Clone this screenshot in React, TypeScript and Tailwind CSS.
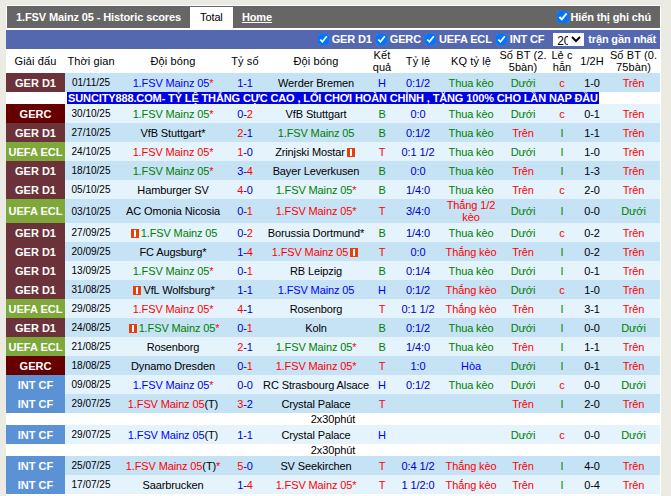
type Tone = "r" | "g" | "b" | "k"

type Row = {
  league: "GER D1" | "GERC" | "UEFA ECL" | "INT CF"
  date: string
  home: [string, Tone]
  homeCard?: boolean
  awayCard?: boolean
  score: [string, string]
  away: [string, Tone]
  res: string
  hc: string
  kq: string
  ou: string
  oe: string
  half: string
  ou2: string
  note?: string
}

const M = "1.FSV Mainz 05"

const rows: Row[] = [
  { league: "GER D1", date: "01/11/25", home: [M + "*", "b"], score: ["1", "1"], away: ["Werder Bremen", "k"], res: "H", hc: "0:1/2", kq: "Thua kèo", ou: "Dưới", oe: "c", half: "1-0", ou2: "Trên" },
  { league: "GERC", date: "30/10/25", home: [M + "*", "g"], score: ["0", "2"], away: ["VfB Stuttgart", "k"], res: "B", hc: "0:0", kq: "Thua kèo", ou: "Dưới", oe: "c", half: "0-1", ou2: "Trên" },
  { league: "GER D1", date: "27/10/25", home: ["VfB Stuttgart*", "k"], score: ["2", "1"], away: [M, "g"], res: "B", hc: "0:1/2", kq: "Thua kèo", ou: "Trên", oe: "l", half: "1-1", ou2: "Trên" },
  { league: "UEFA ECL", date: "24/10/25", home: [M + "*", "r"], score: ["1", "0"], away: ["Zrinjski Mostar", "k"], awayCard: true, res: "T", hc: "0:1 1/2", kq: "Thua kèo", ou: "Dưới", oe: "l", half: "1-0", ou2: "Trên" },
  { league: "GER D1", date: "18/10/25", home: [M + "*", "g"], score: ["3", "4"], away: ["Bayer Leverkusen", "k"], res: "B", hc: "0:0", kq: "Thua kèo", ou: "Trên", oe: "l", half: "1-3", ou2: "Trên" },
  { league: "GER D1", date: "05/10/25", home: ["Hamburger SV", "k"], score: ["4", "0"], away: [M + "*", "g"], res: "B", hc: "1/4:0", kq: "Thua kèo", ou: "Trên", oe: "c", half: "2-0", ou2: "Trên" },
  { league: "UEFA ECL", date: "03/10/25", home: ["AC Omonia Nicosia", "k"], score: ["0", "1"], away: [M + "*", "r"], res: "T", hc: "3/4:0", kq: "Thắng 1/2 kèo", ou: "Dưới", oe: "l", half: "0-0", ou2: "Dưới" },
  { league: "GER D1", date: "27/09/25", home: [M, "g"], homeCard: true, score: ["0", "2"], away: ["Borussia Dortmund*", "k"], res: "B", hc: "1/4:0", kq: "Thua kèo", ou: "Dưới", oe: "c", half: "0-2", ou2: "Trên" },
  { league: "GER D1", date: "20/09/25", home: ["FC Augsburg*", "k"], score: ["1", "4"], away: [M, "r"], awayCard: true, res: "T", hc: "0:0", kq: "Thắng kèo", ou: "Trên", oe: "l", half: "0-2", ou2: "Trên" },
  { league: "GER D1", date: "13/09/25", home: [M + "*", "g"], score: ["0", "1"], away: ["RB Leipzig", "k"], res: "B", hc: "0:1/4", kq: "Thua kèo", ou: "Dưới", oe: "l", half: "0-1", ou2: "Trên" },
  { league: "GER D1", date: "31/08/25", home: ["VfL Wolfsburg*", "k"], homeCard: true, score: ["1", "1"], away: [M, "b"], res: "H", hc: "0:1/2", kq: "Thắng kèo", ou: "Dưới", oe: "c", half: "1-0", ou2: "Trên" },
  { league: "UEFA ECL", date: "29/08/25", home: [M + "*", "r"], score: ["4", "1"], away: ["Rosenborg", "k"], res: "T", hc: "0:1 1/2", kq: "Thắng kèo", ou: "Trên", oe: "l", half: "3-1", ou2: "Trên" },
  { league: "GER D1", date: "24/08/25", home: [M + "*", "g"], homeCard: true, score: ["0", "1"], away: ["Koln", "k"], res: "B", hc: "0:1/2", kq: "Thua kèo", ou: "Dưới", oe: "l", half: "0-0", ou2: "Dưới" },
  { league: "UEFA ECL", date: "21/08/25", home: ["Rosenborg", "k"], score: ["2", "1"], away: [M + "*", "g"], res: "B", hc: "1/4:0", kq: "Thua kèo", ou: "Trên", oe: "l", half: "1-1", ou2: "Trên" },
  { league: "GERC", date: "18/08/25", home: ["Dynamo Dresden", "k"], score: ["0", "1"], away: [M + "*", "r"], res: "T", hc: "1:0", kq: "Hòa", ou: "Dưới", oe: "l", half: "0-1", ou2: "Trên" },
  { league: "INT CF", date: "09/08/25", home: [M + "*", "b"], score: ["0", "0"], away: ["RC Strasbourg Alsace", "k"], res: "H", hc: "0:1/2", kq: "Thua kèo", ou: "Dưới", oe: "c", half: "0-0", ou2: "Dưới" },
  { league: "INT CF", date: "29/07/25", home: [M + "(T)", "r"], score: ["3", "2"], away: ["Crystal Palace", "k"], res: "T", hc: "", kq: "", ou: "Trên", oe: "l", half: "2-0", ou2: "Trên", note: "2x30phút" },
  { league: "INT CF", date: "29/07/25", home: [M + "(T)", "b"], score: ["1", "1"], away: ["Crystal Palace", "k"], res: "H", hc: "", kq: "", ou: "Dưới", oe: "c", half: "0-0", ou2: "Dưới", note: "2x30phút" },
  { league: "INT CF", date: "25/07/25", home: [M + "(T)*", "r"], score: ["5", "0"], away: ["SV Seekirchen", "k"], res: "T", hc: "0:4 1/2", kq: "Thắng kèo", ou: "Trên", oe: "l", half: "4-0", ou2: "Trên" },
  { league: "INT CF", date: "17/07/25", home: ["Saarbrucken", "k"], score: ["1", "4"], away: [M + "*", "r"], res: "T", hc: "1 1/2:0", kq: "Thắng kèo", ou: "Trên", oe: "l", half: "0-4", ou2: "Trên" },
]

const leagueBg = {
  "GER D1": "bg-[#6b3339]",
  GERC: "bg-[#660000]",
  "UEFA ECL": "bg-[#7ea93a]",
  "INT CF": "bg-[#5b92d6]",
}

const tones: Record<Tone, string> = {
  r: "text-[#ff0000]",
  g: "text-[#008000]",
  b: "text-[#0000ff]",
  k: "text-black",
}

function toneOf(v: string) {
  if (v === "T" || v === "c" || v === "Trên" || v.startsWith("Thắng")) return tones.r
  if (v === "B" || v === "Dưới" || v === "Thua kèo" || v === "l") return tones.g
  if (v === "H" || v === "Hòa") return tones.b
  return tones.k
}

function Card() {
  return (
    <svg width="8" height="9" viewBox="0 0 8 9" className="mx-[2px] inline-block align-[-1px]">
      <rect width="8" height="9" fill="#e8400c" />
      <rect x="3" y="1" width="2" height="7" fill="#fff" />
    </svg>
  )
}

function Score({ a, b }: { a: string; b: string }) {
  const x = Number(a)
  const y = Number(b)
  return (
    <>
      <span className={x > y ? tones.r : "text-[#0000c8]"}>{a}</span>
      <span className="text-[#0000c8]">-</span>
      <span className={y > x ? tones.r : "text-[#0000c8]"}>{b}</span>
    </>
  )
}

function Team({ name, card, side }: { name: [string, Tone]; card?: boolean; side: "home" | "away" }) {
  const m = name[0].match(/^(.*?)(\(T\))?(\*)?$/)!
  return (
    <td className="text-center whitespace-nowrap">
      {card && side === "home" && <Card />}
      <span className={tones[name[1]]}>{m[1]}</span>
      {m[2] && <span className="text-black">{m[2]}</span>}
      {m[3] && <span className={name[1] === "k" ? "text-black" : tones.r}>*</span>}
      {card && side === "away" && <Card />}
    </td>
  )
}

function Check({ label }: { label: string }) {
  return (
    <label className="flex items-center gap-[3px]">
      <input type="checkbox" defaultChecked className="m-0 h-[11px] w-[11px]" />
      <span>{label}</span>
    </label>
  )
}

const headers = [
  "Giải đấu",
  "Thời gian",
  "Đội bóng",
  "Tỷ số",
  "Đội bóng",
  "Kết quả",
  "Tỷ lệ",
  "KQ tỷ lệ",
  "Số BT (2. 5bàn)",
  "Lẻ c hẵn",
  "1/2H",
  "Số BT (0. 75bàn)",
]

export default function App() {
  return (
    <div className="h-[496px] w-[671px] overflow-hidden bg-[#ebebe4] text-[11px] leading-[13px] font-['Liberation_Sans',Arial,sans-serif] text-black">
      <div className="mt-[5px] ml-[6px] w-[655px] bg-white pt-[1px] pb-[4px]">
        <div className="mr-px flex h-[22px] items-center justify-between border-l border-white bg-[#666666] pr-[9px] font-bold tracking-[-0.12px] text-white">
          <div className="flex h-full items-center">
            <span className="pr-[9px] pl-[9px]">1.FSV Mainz 05 - Historic scores</span>
            <span className="mt-[1px] flex h-[21px] w-[43px] items-center justify-center bg-white font-normal text-black">Total</span>
            <span className="ml-[9px] underline">Home</span>
          </div>
          <label className="flex items-center gap-px">
            <input type="checkbox" defaultChecked className="m-0 h-[12px] w-[12px]" />
            <span>Hiển thị ghi chú</span>
          </label>
        </div>
        <div className="mt-[2px] mr-px flex h-[19px] items-center justify-end gap-[4px] bg-[#5468b0] pr-[4px] font-bold tracking-[-0.15px] text-white">
          <Check label="GER D1" />
          <Check label="GERC" />
          <Check label="UEFA ECL" />
          <Check label="INT CF" />
          <select defaultValue="20" className="ml-[5px] h-[13px] w-[31px] bg-white text-[12px] font-normal text-black">
            <option>10</option>
            <option>20</option>
            <option>30</option>
          </select>
          <span>trận gần nhất</span>
        </div>
        <table className="w-[654px] table-fixed border-collapse text-center">
          <colgroup>
            <col className="w-[59px]" />
            <col className="w-[52px]" />
            <col className="w-[112px]" />
            <col className="w-[32px]" />
            <col className="w-[110px]" />
            <col className="w-[22px]" />
            <col className="w-[50px]" />
            <col className="w-[56px]" />
            <col className="w-[48px]" />
            <col className="w-[30px]" />
            <col className="w-[30px]" />
            <col className="w-[53px]" />
          </colgroup>
          <thead>
            <tr className="h-[24px]">
              {headers.map((h, i) => (
                <th key={i} className="p-0 text-center text-[11px] leading-[12px] font-normal tracking-[0.1px]">
                  {h}
                </th>
              ))}
            </tr>
          </thead>
          <tbody className="tracking-[-0.12px]">
            {rows.map((r, i) => {
              const rowBg = i % 2 === 0 ? "bg-[#c6e2f5]" : "bg-[#e4f3fc]"
              const wrapped = r.kq.length > 10
              return [
                <tr key={i} className={`${wrapped ? "h-[24px]" : "h-[19px] [&>td]:pt-[2px]"} ${rowBg}`}>
                  <td className={`${leagueBg[r.league]} font-bold tracking-normal text-white`}>{r.league}</td>
                  <td className="pt-0! text-[10px] tracking-normal">{r.date}</td>
                  <Team name={r.home} card={r.homeCard} side="home" />
                  <td>
                    <Score a={r.score[0]} b={r.score[1]} />
                  </td>
                  <Team name={r.away} card={r.awayCard} side="away" />
                  <td className={toneOf(r.res)}>{r.res}</td>
                  <td className="whitespace-nowrap text-[#0000c8]">{r.hc}</td>
                  <td className={`${toneOf(r.kq)} ${wrapped ? "leading-[12px]" : ""}`}>{r.kq}</td>
                  <td className={toneOf(r.ou)}>{r.ou}</td>
                  <td className={toneOf(r.oe)}>{r.oe}</td>
                  <td>{r.half}</td>
                  <td className={toneOf(r.ou2)}>{r.ou2}</td>
                </tr>,
                i === 0 && (
                  <tr key="ad" className="h-[12px] bg-white">
                    <td colSpan={12} className="p-0 text-center leading-[12px]">
                      <span className="inline-block bg-[#0000e6] px-px font-bold tracking-[-0.13px] whitespace-nowrap text-white">
                        SUNCITY888.COM- TỶ LỆ THẮNG CỰC CAO , LỐI CHƠI HOÀN CHỈNH , TẶNG 100% CHO LẦN NẠP ĐẦU
                      </span>
                    </td>
                  </tr>
                ),
                r.note && (
                  <tr key={`n${i}`} className="h-[12px] bg-white">
                    <td colSpan={12} className="p-0 text-center leading-[12px]">
                      {r.note}
                    </td>
                  </tr>
                ),
              ]
            })}
          </tbody>
        </table>
      </div>
    </div>
  )
}
